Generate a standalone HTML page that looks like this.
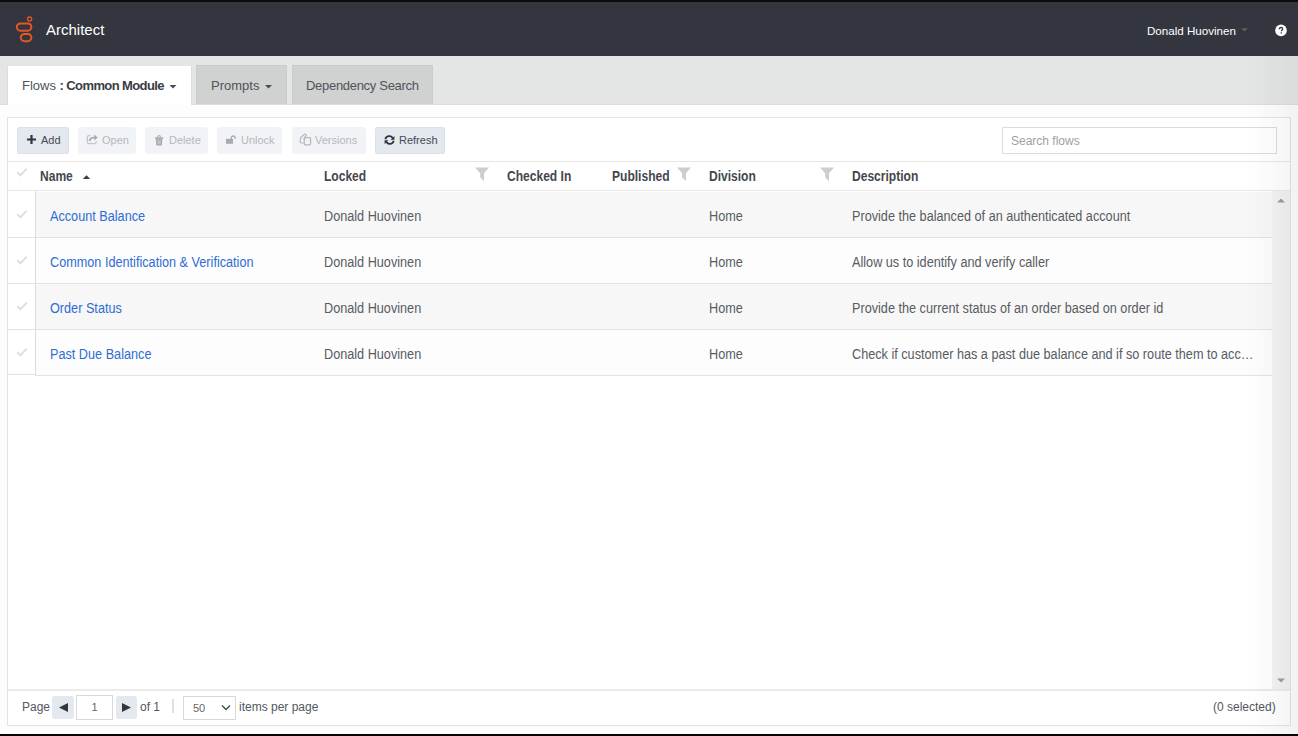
<!DOCTYPE html>
<html><head><meta charset="utf-8">
<style>
*{box-sizing:border-box;margin:0;padding:0}
html,body{width:1298px;height:736px;overflow:hidden;background:#fdfdfd;font-family:"Liberation Sans",sans-serif;color:#4a4e55}
div,span,svg{position:absolute}
b{font-weight:bold}
.t{white-space:nowrap}
#topbar{left:0;top:0;width:1298px;height:2px;background:#0c0c0d}
#botbar{left:0;top:734px;width:1298px;height:2px;background:#050505}
#hdr{left:0;top:2px;width:1298px;height:54px;background:#33363e}
#tabbar{left:0;top:56px;width:1298px;height:49px;background:#e4e6e6}
.tab{top:10px;height:39px;background:#d0d1d1;font-size:13px;line-height:39px;color:#4f535b;box-shadow:inset 0 1px 0 #c9caca,inset 1px 0 0 #cbcccc,inset -1px 0 0 #cbcccc}
.tab.active{background:#fff;height:39px;box-shadow:-1px 0 0 #dcdddd,1px 0 0 #dcdddd;z-index:2}
#panel{left:7px;top:117px;width:1284px;height:609px;border:1px solid #e3e3e3;background:#fff}
.btn{height:27px;top:127px;border-radius:3px;background:#f1f3f7;font-size:11px;line-height:26px;color:#b5b8bd}
.btn.en{background:#e4e8ef;color:#464a52;box-shadow:inset 0 0 0 1px #dde1e8}
.hline{left:8px;width:1282px;height:1px;background:#e6e6e6}
.th{top:162px;line-height:28px;font-size:14px;font-weight:bold;color:#43474e;transform:scaleX(0.86);transform-origin:0 0}
.rowbg{left:36px;width:1237px;height:45px;background:#f7f7f7}
.rline{left:8px;width:1265px;height:1px;background:#e3e3e3}
.td{line-height:16px;font-size:14px;color:#575b62;transform:scaleX(0.905);transform-origin:0 0}
.lnk{color:#2f6dd3}
.chk{width:12px;height:10px}
.filt{width:14px;height:14px}
</style></head>
<body>
<div id="topbar"></div>
<div id="hdr"></div>
<svg style="left:0;top:0" width="40" height="50" viewBox="0 0 40 50">
  <circle cx="29.6" cy="19.1" r="2.1" fill="none" stroke="#ea5325" stroke-width="1.3"/>
  <rect x="16.8" y="23.5" width="14.6" height="7.2" rx="3.6" fill="none" stroke="#ea5325" stroke-width="2"/>
  <rect x="20.8" y="34" width="10.6" height="7.2" rx="3.6" fill="none" stroke="#ea5325" stroke-width="2"/>
</svg>
<div class="t" style="left:46px;top:21px;font-size:15px;line-height:18px;color:#fff">Architect</div>
<div class="t" style="left:1147px;top:22.5px;font-size:11.6px;line-height:16px;color:#fff">Donald Huovinen</div>
<svg style="left:1240px;top:27px" width="9" height="6" viewBox="0 0 9 6"><path d="M1 1.3h7L4.5 4.6z" fill="#5d605c"/></svg>
<svg style="left:1274px;top:24px" width="14" height="13" viewBox="0 0 14 13">
  <circle cx="7" cy="6.4" r="5.8" fill="#fff"/>
  <path d="M5.3 5.2c0-1 .7-1.7 1.7-1.7s1.7.7 1.7 1.5c0 1.1-1.4 1.2-1.4 2.3" fill="none" stroke="#33363e" stroke-width="1.3"/>
  <rect x="6.6" y="8.3" width="1.3" height="1.3" fill="#33363e"/>
</svg>

<div id="tabbar"></div>
<div style="left:0;top:104px;width:1298px;height:1px;background:#dcdddd"></div>

<div class="tab active t" style="left:8px;top:66px;width:183px;padding-left:14px">Flows <b style="color:#383c44;letter-spacing:-0.6px">: Common Module</b></div>
<svg style="left:168px;top:84px;z-index:3" width="10" height="6" viewBox="0 0 10 6"><path d="M1.5 1h7L5 4.6z" fill="#4a4d50"/></svg>
<div class="tab t" style="left:196px;top:65px;height:39px;line-height:41px;width:91px;padding-left:15px">Prompts</div>
<svg style="left:264px;top:84px" width="10" height="6" viewBox="0 0 10 6"><path d="M1 1h7L4.5 4.6z" fill="#4a4d50"/></svg>
<div class="tab t" style="left:292px;top:65px;height:39px;line-height:41px;width:141px;padding-left:14px;letter-spacing:-0.3px">Dependency Search</div>

<div id="panel"></div>
<!-- toolbar -->
<div class="btn en t" style="left:17px;width:52px;padding-left:24px">Add</div>
<svg style="left:27px;top:135px" width="10" height="10" viewBox="0 0 10 10"><path d="M0 4.5h9M4.5 0v9" stroke="#33363d" stroke-width="2.2"/></svg>
<div class="btn t" style="left:78px;width:58px;padding-left:24px">Open</div>
<svg style="left:86px;top:134px" width="12" height="11" viewBox="0 0 12 11"><path d="M4.6 1.6H2.8c-.9 0-1.5.6-1.5 1.5v5c0 .9.6 1.5 1.5 1.5h5.9c.9 0 1.5-.6 1.5-1.5V7" fill="none" stroke="#c2c5ca" stroke-width="1.3"/><path d="M3.5 7.2C3.8 4.6 5.8 3.5 8.9 3.5" fill="none" stroke="#a4a7ac" stroke-width="1.7"/><path d="M8.4 .6l3.2 2.9-3.2 2.9z" fill="#a4a7ac"/></svg>
<div class="btn t" style="left:145px;width:63px;padding-left:24px">Delete</div>
<svg style="left:155px;top:135px" width="9" height="11" viewBox="0 0 9 11"><path d="M2.6 2.3C2.6 1.2 3.2.7 4.1.7s1.5.5 1.5 1.6" fill="none" stroke="#b3b6bb" stroke-width="1.2"/><rect x="0" y="2.2" width="8.2" height="1.5" fill="#a7aaaf"/><path d="M.8 3.5h6.6l-.4 6c0 .7-.5 1.1-1.1 1.1H2.3c-.6 0-1.1-.4-1.1-1.1z" fill="#a7aaaf"/><path d="M3.2 5v4.2M5 5v4.2" stroke="#d3d5d9" stroke-width=".9"/></svg>
<div class="btn t" style="left:217px;width:65px;padding-left:24px">Unlock</div>
<svg style="left:225px;top:134px" width="12" height="11" viewBox="0 0 12 11"><rect x="1" y="4.8" width="7" height="5" fill="#a8abb0"/><path d="M6.3 4.9V4c0-1.2.8-2 1.9-2s1.9.8 1.9 2v1" fill="none" stroke="#a8abb0" stroke-width="1.3"/></svg>
<div class="btn t" style="left:292px;width:74px;padding-left:23px">Versions</div>
<svg style="left:299px;top:133px" width="14" height="13" viewBox="0 0 14 13"><path d="M7.3 1.6C6.6 1 5.6 1 4.9 1.6L2 4.5c-.6.6-.8 1.3-.8 2.1v2.2c0 .7.5 1.2 1.2 1.2h2.2" fill="none" stroke="#b3b6bb" stroke-width="1.2"/><path d="M7.5 1.8L4.6 6.5" fill="none" stroke="#b3b6bb" stroke-width="1.2"/><rect x="5.3" y="4.6" width="6.3" height="7.3" rx="1.1" fill="none" stroke="#b3b6bb" stroke-width="1.2"/></svg>
<div class="btn en t" style="left:375px;width:70px;padding-left:24px">Refresh</div>
<svg style="left:384px;top:135px" width="11" height="10" viewBox="0 0 11 10"><path d="M1.3 4.3A4.1 4.1 0 0 1 8.7 2.9M9.7 5.7A4.1 4.1 0 0 1 2.3 7.1" fill="none" stroke="#2f3238" stroke-width="1.7"/><path d="M10.4 .9v3.9H6.5zM.6 9.1V5.2h3.9z" fill="#2f3238"/></svg>
<div class="t" style="left:1002px;top:127px;width:275px;height:27px;border:1px solid #dcdcdc;background:#fff;font-size:12px;line-height:27px;padding-left:8px;color:#a0a0a0">Search flows</div>

<!-- table header -->
<div class="hline" style="top:161px"></div>
<div class="hline" style="top:190px;background:#e9e9e9"></div>
<svg class="chk" style="left:16px;top:167px" viewBox="0 0 12 10"><path d="M1.2 5.2l3.2 3.1L10.8 1.6" fill="none" stroke="#dfdfdf" stroke-width="2"/></svg>
<div class="th t" style="left:40px">Name</div>
<svg style="left:82px;top:173.5px" width="9" height="6" viewBox="0 0 9 6"><path d="M.8 5h7.4L4.5 1.2z" fill="#3a3e46"/></svg>
<div class="th t" style="left:324px">Locked</div>
<svg class="filt" style="left:475px;top:167px" viewBox="0 0 14 14"><path d="M0 .6h14L9 6.3V14L5.2 10.6V6.3z" fill="#cdcdcd"/></svg>
<div class="th t" style="left:507px">Checked In</div>
<div class="th t" style="left:612px">Published</div>
<svg class="filt" style="left:677px;top:167px" viewBox="0 0 14 14"><path d="M0 .6h14L9 6.3V14L5.2 10.6V6.3z" fill="#cdcdcd"/></svg>
<div class="th t" style="left:709px">Division</div>
<svg class="filt" style="left:820px;top:167px" viewBox="0 0 14 14"><path d="M0 .6h14L9 6.3V14L5.2 10.6V6.3z" fill="#cdcdcd"/></svg>
<div class="th t" style="left:852px">Description</div>

<!-- rows -->
<div class="rowbg" style="top:192px"></div>
<div class="rowbg" style="top:238px;background:#fdfdfd"></div>
<div class="rowbg" style="top:284px"></div>
<div class="rowbg" style="top:330px;background:#fdfdfd"></div>
<div class="rline" style="top:237px"></div>
<div class="rline" style="top:283px"></div>
<div class="rline" style="top:329px"></div>
<div class="rline" style="top:374px;width:28px"></div>
<div class="rline" style="top:375px;left:36px;width:1236px"></div>
<div style="left:35px;top:191px;width:1px;height:185px;background:#dcdcdc"></div>
<svg class="chk" style="left:16px;top:209px" viewBox="0 0 12 10"><path d="M1.2 5.2l3.2 3.1L10.8 1.6" fill="none" stroke="#dfdfdf" stroke-width="2"/></svg>
<svg class="chk" style="left:16px;top:255px" viewBox="0 0 12 10"><path d="M1.2 5.2l3.2 3.1L10.8 1.6" fill="none" stroke="#dfdfdf" stroke-width="2"/></svg>
<svg class="chk" style="left:16px;top:301px" viewBox="0 0 12 10"><path d="M1.2 5.2l3.2 3.1L10.8 1.6" fill="none" stroke="#dfdfdf" stroke-width="2"/></svg>
<svg class="chk" style="left:16px;top:347px" viewBox="0 0 12 10"><path d="M1.2 5.2l3.2 3.1L10.8 1.6" fill="none" stroke="#dfdfdf" stroke-width="2"/></svg>

<div class="td lnk t" style="left:50px;top:208px">Account Balance</div>
<div class="td t" style="left:324px;top:208px">Donald Huovinen</div>
<div class="td t" style="left:709px;top:208px">Home</div>
<div class="td t" style="left:852px;top:208px">Provide the balanced of an authenticated account</div>

<div class="td lnk t" style="left:50px;top:254px">Common Identification &amp; Verification</div>
<div class="td t" style="left:324px;top:254px">Donald Huovinen</div>
<div class="td t" style="left:709px;top:254px">Home</div>
<div class="td t" style="left:852px;top:254px">Allow us to identify and verify caller</div>

<div class="td lnk t" style="left:50px;top:300px">Order Status</div>
<div class="td t" style="left:324px;top:300px">Donald Huovinen</div>
<div class="td t" style="left:709px;top:300px">Home</div>
<div class="td t" style="left:852px;top:300px">Provide the current status of an order based on order id</div>

<div class="td lnk t" style="left:50px;top:346px">Past Due Balance</div>
<div class="td t" style="left:324px;top:346px">Donald Huovinen</div>
<div class="td t" style="left:709px;top:346px">Home</div>
<div class="td t" style="left:852px;top:346px">Check if customer has a past due balance and if so route them to acc…</div>

<!-- scrollbar -->
<div style="left:1272px;top:191px;width:18px;height:498px;background:linear-gradient(90deg,#f4f4f4,#f0f0f0)"></div>
<svg style="left:1276px;top:197px" width="10" height="7" viewBox="0 0 10 7"><path d="M1 5.5h8L5 1.5z" fill="#9c9c9c"/></svg>
<svg style="left:1276px;top:677px" width="10" height="7" viewBox="0 0 10 7"><path d="M1 1.5h8L5 5.5z" fill="#9c9c9c"/></svg>

<!-- footer -->
<div class="hline" style="top:689px;background:#ebebeb;height:2px"></div>
<div class="t" style="left:22px;top:700px;font-size:12px;line-height:15px;color:#53575e">Page</div>
<div style="left:52px;top:696px;width:22px;height:23px;border-radius:3px;background:#e4e8ef"></div>
<svg style="left:58px;top:702px" width="11" height="11" viewBox="0 0 11 11"><path d="M10 1v9L1 5.5z" fill="#33363d"/></svg>
<div class="t" style="left:76px;top:695px;width:37px;height:25px;border:1px solid #d9d9d9;background:#fff;font-size:11px;line-height:23px;text-align:center;color:#666">1</div>
<div style="left:116px;top:696px;width:21px;height:23px;border-radius:3px;background:#e4e8ef"></div>
<svg style="left:121px;top:702px" width="11" height="11" viewBox="0 0 11 11"><path d="M1 1v9l9-4.5z" fill="#33363d"/></svg>
<div class="t" style="left:140px;top:700px;font-size:12px;line-height:15px;color:#53575e">of 1</div>
<div style="left:172px;top:699px;width:2px;height:14px;background:#dde2ea"></div>
<div class="t" style="left:183px;top:696px;width:53px;height:24px;border:1px solid #d9d9d9;background:#fff;font-size:11px;line-height:22px;padding-left:9px;color:#666">50</div>
<svg style="left:221px;top:704px" width="10" height="7" viewBox="0 0 10 7"><path d="M1 1.5l4 4 4-4" fill="none" stroke="#4a4d50" stroke-width="1.5"/></svg>
<div class="t" style="left:239px;top:700px;font-size:12px;line-height:15px;color:#53575e">items per page</div>
<div class="t" style="left:1213px;top:700px;font-size:12px;line-height:15px;color:#53575e">(0 selected)</div>

<div style="left:1245px;top:56px;width:53px;height:678px;background:linear-gradient(90deg,rgba(0,0,0,0),rgba(0,0,0,0.045))"></div>
<div id="botbar"></div>
</body></html>
